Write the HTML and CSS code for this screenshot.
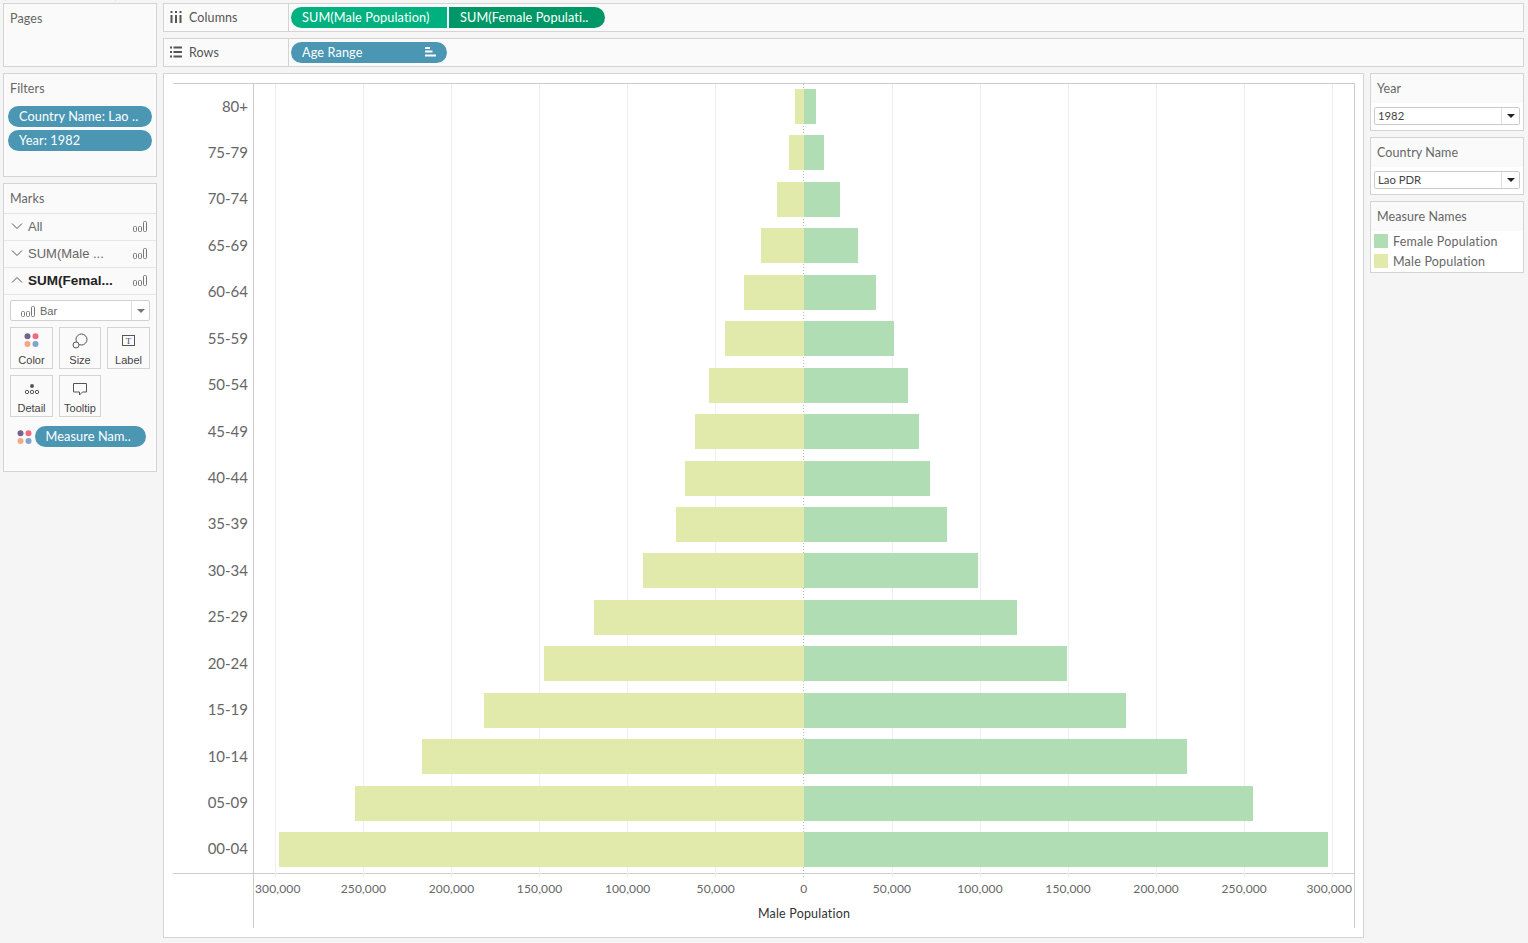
FILE: index.html
```html
<!DOCTYPE html>
<html lang="en">
<head>
<meta charset="utf-8">
<title>Population Pyramid</title>
<link rel="stylesheet" href="styles.css">
</head>
<body>
<svg class="defs" width="0" height="0" aria-hidden="true">
  <symbol id="baricon" viewBox="0 0 14 12">
    <rect x="0.5" y="6.500" width="3" height="5" rx="1" fill="none" stroke="#777"/>
    <rect x="5.500" y="6.500" width="3" height="5" rx="1" fill="none" stroke="#777"/>
    <rect x="10.500" y="1.500" width="3" height="10" rx="1" fill="none" stroke="#777"/>
  </symbol>
  <symbol id="dots" viewBox="0 0 15 14">
    <circle cx="3.5" cy="3.3" r="3" fill="#75638f"/>
    <circle cx="11.5" cy="3.3" r="3" fill="#ef6b7f"/>
    <circle cx="3.5" cy="11" r="3" fill="#f3a983"/>
    <circle cx="11.5" cy="11" r="3" fill="#7da5cd"/>
  </symbol>
  <symbol id="down" viewBox="0 0 12 8"><path d="M1 1.500 6 6.500 11 1.500" fill="none" stroke="#555" stroke-width="1"/></symbol>
  <symbol id="up" viewBox="0 0 12 8"><path d="M1 6.500 6 1.500 11 6.500" fill="none" stroke="#555" stroke-width="1"/></symbol>
</svg>
<div class="topstrip"><span class="stub"></span></div>
<div class="app">
  <aside class="left">
    <section class="panel pages"><h2 class="title">Pages</h2></section>
    <section class="panel filters">
      <h2 class="title">Filters</h2>
      <div class="pill blue wide">Country Name: Lao ..</div>
      <div class="pill blue wide">Year: 1982</div>
    </section>
    <section class="panel marks">
      <h2 class="title marks-title">Marks</h2>
      <div class="mrow"><svg class="chev"><use href="#down"/></svg><span class="mname">All</span><svg class="bi"><use href="#baricon"/></svg></div>
      <div class="mrow"><svg class="chev"><use href="#down"/></svg><span class="mname">SUM(Male ...</span><svg class="bi"><use href="#baricon"/></svg></div>
      <div class="mrow"><svg class="chev"><use href="#up"/></svg><span class="mname strong">SUM(Femal...</span><svg class="bi"><use href="#baricon"/></svg></div>
      <div class="marktype">
        <svg class="bi"><use href="#baricon"/></svg><span class="mt-name">Bar</span><span class="mt-caret"><i class="caret"></i></span>
      </div>
      <div class="cards">
        <div class="card"><svg class="card-dots"><use href="#dots"/></svg><span>Color</span></div>
        <div class="card">
          <svg class="card-ico" viewBox="0 0 16 16"><circle cx="9.500" cy="6.500" r="5.500" fill="none" stroke="#555"/><circle cx="4" cy="12" r="3" fill="#fafafa" stroke="#555"/></svg>
          <span>Size</span></div>
        <div class="card"><span class="tbox">T</span><span>Label</span></div>
        <div class="card">
          <svg class="card-ico" viewBox="0 0 16 16"><circle cx="8" cy="5" r="2" fill="#555"/><circle cx="3" cy="11" r="1.700" fill="none" stroke="#555"/><circle cx="8" cy="11" r="1.700" fill="none" stroke="#555"/><circle cx="13" cy="11" r="1.700" fill="none" stroke="#555"/></svg>
          <span>Detail</span></div>
        <div class="card">
          <svg class="card-ico" viewBox="0 0 16 16"><path d="M1.500 2.500h13v8.500h-4l-3 3v-3h-6z" fill="none" stroke="#555"/></svg>
          <span>Tooltip</span></div>
      </div>
      <div class="encoding"><svg class="enc-dots"><use href="#dots"/></svg><div class="pill blue enc-pill">Measure Nam..</div></div>
    </section>
  </aside>
  <main class="main">
    <div class="shelf">
      <div class="shelf-label">
        <svg class="shelf-ico" viewBox="0 0 12 12"><path d="M1.500 0v2M6 0v2M10.500 0v2M1.500 4v8M6 4v8M10.500 4v8" stroke="#555" stroke-width="2"/></svg>
        <span>Columns</span>
      </div>
      <div class="pill green">SUM(Male Population)</div>
      <div class="pill green dark">SUM(Female Populati..</div>
    </div>
    <div class="shelf">
      <div class="shelf-label">
        <svg class="shelf-ico" viewBox="0 0 12 12"><path d="M0 1.500h2M0 6h2M0 10.500h2M3.500 1.500H12M3.500 6H12M3.500 10.500H12" stroke="#555" stroke-width="1.800"/></svg>
        <span>Rows</span>
      </div>
      <div class="pill blue sorted">Age Range
        <svg class="sort" viewBox="0 0 11 10"><path d="M0 1h5M0 4.500h7.500M0 8.500h11" stroke="#fff" stroke-width="2"/></svg>
      </div>
    </div>
    <div class="body">
      <section class="chart">
        <div class="viz">
          <div class="labels">
            <div class="lab">80+</div><div class="lab">75-79</div><div class="lab">70-74</div><div class="lab">65-69</div>
            <div class="lab">60-64</div><div class="lab">55-59</div><div class="lab">50-54</div><div class="lab">45-49</div>
            <div class="lab">40-44</div><div class="lab">35-39</div><div class="lab">30-34</div><div class="lab">25-29</div>
            <div class="lab">20-24</div><div class="lab">15-19</div><div class="lab">10-14</div><div class="lab">05-09</div>
            <div class="lab">00-04</div>
          </div>
          <div class="pane">
            <div class="plot">
              <div class="gridlines">
                <i></i><i></i><i></i><i></i><i></i><i></i><i class="zero"></i><i></i><i></i><i></i><i></i><i></i><i></i>
              </div>
              <div class="brow"><div class="half l"><b class="bar male" style="width:9px"></b></div><div class="half"><b class="bar female" style="width:12px"></b></div></div>
              <div class="brow"><div class="half l"><b class="bar male" style="width:15px"></b></div><div class="half"><b class="bar female" style="width:20px"></b></div></div>
              <div class="brow"><div class="half l"><b class="bar male" style="width:27px"></b></div><div class="half"><b class="bar female" style="width:36px"></b></div></div>
              <div class="brow"><div class="half l"><b class="bar male" style="width:43px"></b></div><div class="half"><b class="bar female" style="width:54px"></b></div></div>
              <div class="brow"><div class="half l"><b class="bar male" style="width:60px"></b></div><div class="half"><b class="bar female" style="width:72px"></b></div></div>
              <div class="brow"><div class="half l"><b class="bar male" style="width:79px"></b></div><div class="half"><b class="bar female" style="width:90px"></b></div></div>
              <div class="brow"><div class="half l"><b class="bar male" style="width:95px"></b></div><div class="half"><b class="bar female" style="width:104px"></b></div></div>
              <div class="brow"><div class="half l"><b class="bar male" style="width:109px"></b></div><div class="half"><b class="bar female" style="width:115px"></b></div></div>
              <div class="brow"><div class="half l"><b class="bar male" style="width:119px"></b></div><div class="half"><b class="bar female" style="width:126px"></b></div></div>
              <div class="brow"><div class="half l"><b class="bar male" style="width:128px"></b></div><div class="half"><b class="bar female" style="width:143px"></b></div></div>
              <div class="brow"><div class="half l"><b class="bar male" style="width:161px"></b></div><div class="half"><b class="bar female" style="width:174px"></b></div></div>
              <div class="brow"><div class="half l"><b class="bar male" style="width:210px"></b></div><div class="half"><b class="bar female" style="width:213px"></b></div></div>
              <div class="brow"><div class="half l"><b class="bar male" style="width:260px"></b></div><div class="half"><b class="bar female" style="width:263px"></b></div></div>
              <div class="brow"><div class="half l"><b class="bar male" style="width:320px"></b></div><div class="half"><b class="bar female" style="width:322px"></b></div></div>
              <div class="brow"><div class="half l"><b class="bar male" style="width:382px"></b></div><div class="half"><b class="bar female" style="width:383px"></b></div></div>
              <div class="brow"><div class="half l"><b class="bar male" style="width:449px"></b></div><div class="half"><b class="bar female" style="width:449px"></b></div></div>
              <div class="brow"><div class="half l"><b class="bar male" style="width:525px"></b></div><div class="half"><b class="bar female" style="width:524px"></b></div></div>
            </div>
            <div class="ticks">
              <span class="t first">300,000</span><span class="t">250,000</span><span class="t">200,000</span><span class="t">150,000</span><span class="t">100,000</span><span class="t">50,000</span><span class="t">0</span><span class="t">50,000</span><span class="t">100,000</span><span class="t">150,000</span><span class="t">200,000</span><span class="t">250,000</span><span class="t last">300,000</span>
            </div>
            <div class="axis-title">Male Population</div>
          </div>
        </div>
      </section>
      <aside class="right">
        <section class="panel rp">
          <h2 class="title">Year</h2>
          <div class="rp-body"><div class="select"><span class="sel-val">1982</span><span class="sel-btn"><i class="caret dk"></i></span></div></div>
        </section>
        <section class="panel rp">
          <h2 class="title">Country Name</h2>
          <div class="rp-body"><div class="select"><span class="sel-val">Lao PDR</span><span class="sel-btn"><i class="caret dk"></i></span></div></div>
        </section>
        <section class="panel rp legend">
          <h2 class="title">Measure Names</h2>
          <div class="legend-body">
            <div class="lg"><i class="sw female"></i>Female Population</div>
            <div class="lg"><i class="sw male"></i>Male Population</div>
          </div>
        </section>
      </aside>
    </div>
  </main>
</div>
</body>
</html>
```

FILE: styles.css
```css
* { box-sizing: border-box; }
html, body { margin: 0; height: 943px; overflow: hidden; }
body { background: #f5f5f5; font-family: Lato, "Open Sans", sans-serif; color: #666; }
.defs { position: absolute; }
.topstrip { height: 3px; padding-left: 5px; }
.stub { display: block; width: 111px; height: 1px; border: solid #ddd; border-width: 0 1px; }
.app { display: flex; gap: 6px; padding-left: 3px; }
.left { width: 154px; display: flex; flex-direction: column; gap: 6px; flex: none; }
.panel { background: #fafafa; border: 1px solid #d4d4d4; }
.title { margin: 0; font-size: 12.5px; font-weight: 400; line-height: 18px; padding: 6px 6px 0; color: #666; letter-spacing: .1px; }
.pages { height: 64px; }
.filters { height: 104px; }
.filters .title { height: 32px; }
.pill { display: flex; align-items: center; height: 21px; border-radius: 11px; color: #fff; font-size: 12.7px; padding: 0 0 1px 11px; white-space: nowrap; letter-spacing: .12px; }
.blue { background: #4b96b3; }
.wide { width: 144px; margin: 0 0 3px 4px; }
.marks { height: 289px; }
.marks-title { height: 30px; border-bottom: 1px solid #e4e4e4; }
.mrow { display: flex; align-items: center; height: 27px; border-bottom: 1px solid #e6e6e6; padding: 0 9px 2px 7px; font: 13px "Liberation Sans", sans-serif; color: #666; }
.mrow:nth-of-type(4) { height: 26px; }
.chev { width: 12px; height: 8px; flex: none; }
.mname { margin-left: 5px; flex: 1; white-space: nowrap; }
.strong { font-weight: 700; font-size: 13.5px; color: #222; }
.bi { width: 14px; height: 12px; flex: none; }
.marktype { display: flex; align-items: center; height: 21px; width: 140px; margin: 5px 0 6px 6px; background: #fff; border: 1px solid #d0d0d0; border-radius: 2px; padding-left: 10px; font: 11px "Liberation Sans", sans-serif; }
.mt-name { margin-left: 5px; flex: 1; }
.mt-caret { width: 18px; height: 100%; border-left: 1px solid #ddd; display: flex; align-items: center; justify-content: center; }
.caret { width: 0; height: 0; border: 4px solid transparent; border-top-color: #777; border-bottom: 0; }
.caret.dk { border-top-color: #222; }
.cards { display: grid; grid-template-columns: 43px 42px 43px; column-gap: 6px; row-gap: 6px; margin-left: 6px; }
.card { height: 42px; border: 1px solid #d4d4d4; display: flex; flex-direction: column; align-items: center; font: 11px "Liberation Sans", sans-serif; color: #444; padding-top: 5px; justify-content: space-between; padding-bottom: 2px; }
.card-dots { width: 15px; height: 14px; }
.card-ico { width: 16px; height: 16px; }
.tbox { display: flex; align-items: center; justify-content: center; width: 13px; height: 11px; border: 1px solid #555; font: 9px "Liberation Serif", serif; color: #444; margin-top: 2px; }
.encoding { display: flex; align-items: center; margin: 9px 0 0 13px; gap: 3px; }
.enc-dots { width: 15px; height: 14px; flex: none; }
.enc-pill { width: 111px; padding-left: 10.5px; }
.main { width: 1361px; display: flex; flex-direction: column; gap: 6px; flex: none; }
.shelf { height: 29px; display: flex; align-items: center; gap: 2px; background: #fafafa; border: 1px solid #d4d4d4; }
.shelf-label { width: 125px; height: 100%; display: flex; align-items: center; gap: 7px; padding: 0 0 1px 6px; border-right: 1px solid #d4d4d4; font-size: 12.5px; color: #555; flex: none; letter-spacing: .1px; }
.shelf-ico { width: 12px; height: 12px; flex: none; }
.green { width: 156px; background: #00b180; border-radius: 11px 0 0 11px; }
.green.dark { background: #009767; border-radius: 0 11px 11px 0; }
.sorted { width: 156px; position: relative; }
.sort { width: 11px; height: 10px; position: absolute; right: 11px; top: 5px; }
.body { display: flex; gap: 6px; align-items: flex-start; }
.chart { width: 1201px; height: 865px; background: #fff; border: 1px solid #d4d4d4; padding: 9px; }
.viz { display: flex; align-items: flex-start; }
.labels { width: 80px; height: 791px; flex: none; display: grid; grid-template-rows: repeat(17, 1fr); padding: .35px 0 1.3px; box-shadow: inset 0 1px #ccc, inset 0 -1px #ccc; }
.lab { display: flex; align-items: center; justify-content: flex-end; padding: 0 5px 2px 0; font-size: 15px; color: #666; }
.pane { width: 1102px; height: 845px; flex: none; border: solid #ccc; border-width: 0 1px; }
.plot { position: relative; height: 791px; display: grid; grid-template-rows: repeat(17, 1fr); padding: .35px 0 1.3px; box-shadow: inset 0 1px #ccc, inset 0 -1px #ccc; }
.gridlines { position: absolute; top: 1px; left: 0; right: 0; bottom: -4px; display: flex; justify-content: space-between; padding: 0 20.9px 0 21px; }
.gridlines i { width: 1px; background: #efefef; }
.gridlines .zero { background: repeating-linear-gradient(#bbb 0 1px, transparent 1px 3px); }
.brow { display: grid; grid-template-columns: 1fr 1fr; position: relative; align-items: center; }
.half { display: flex; }
.half.l { justify-content: flex-end; }
.bar { display: block; height: 35px; }
.male { background: #e1eaab; }
.female { background: #b1ddb5; }
.ticks { display: flex; height: 28px; align-items: center; font-size: 12px; color: #666; letter-spacing: .15px; }
.t { width: 88.08px; text-align: center; flex: none; }
.t.first { width: 65.4px; text-align: left; padding-left: 1px; }
.t.last { width: 65.8px; text-align: right; padding-right: 2px; }
.axis-title { text-align: center; font-size: 12.5px; letter-spacing: .2px; color: #333; line-height: 16px; margin-top: 4px; }
.right { width: 154px; display: flex; flex-direction: column; gap: 6px; flex: none; }
.rp { height: 58px; }
.rp .title { height: 29px; }
.rp-body { background: #fff; height: 27px; padding: 4px 3px 0; }
.select { display: flex; height: 18px; width: 146px; background: #fff; border: 1px solid #ccc; border-radius: 2px; font-size: 11.3px; color: #444; align-items: center; }
.sel-val { flex: 1; padding: 0 0 1px 3px; }
.sel-btn { width: 18px; height: 100%; border-left: 1px solid #ddd; display: flex; align-items: center; justify-content: center; }
.legend { height: 72px; }
.legend-body { background: #fff; height: 41px; padding-left: 3px; }
.lg { display: flex; align-items: center; height: 20px; font-size: 12.5px; color: #666; letter-spacing: .2px; }
.sw { width: 14px; height: 14px; margin-right: 5px; flex: none; }
```
